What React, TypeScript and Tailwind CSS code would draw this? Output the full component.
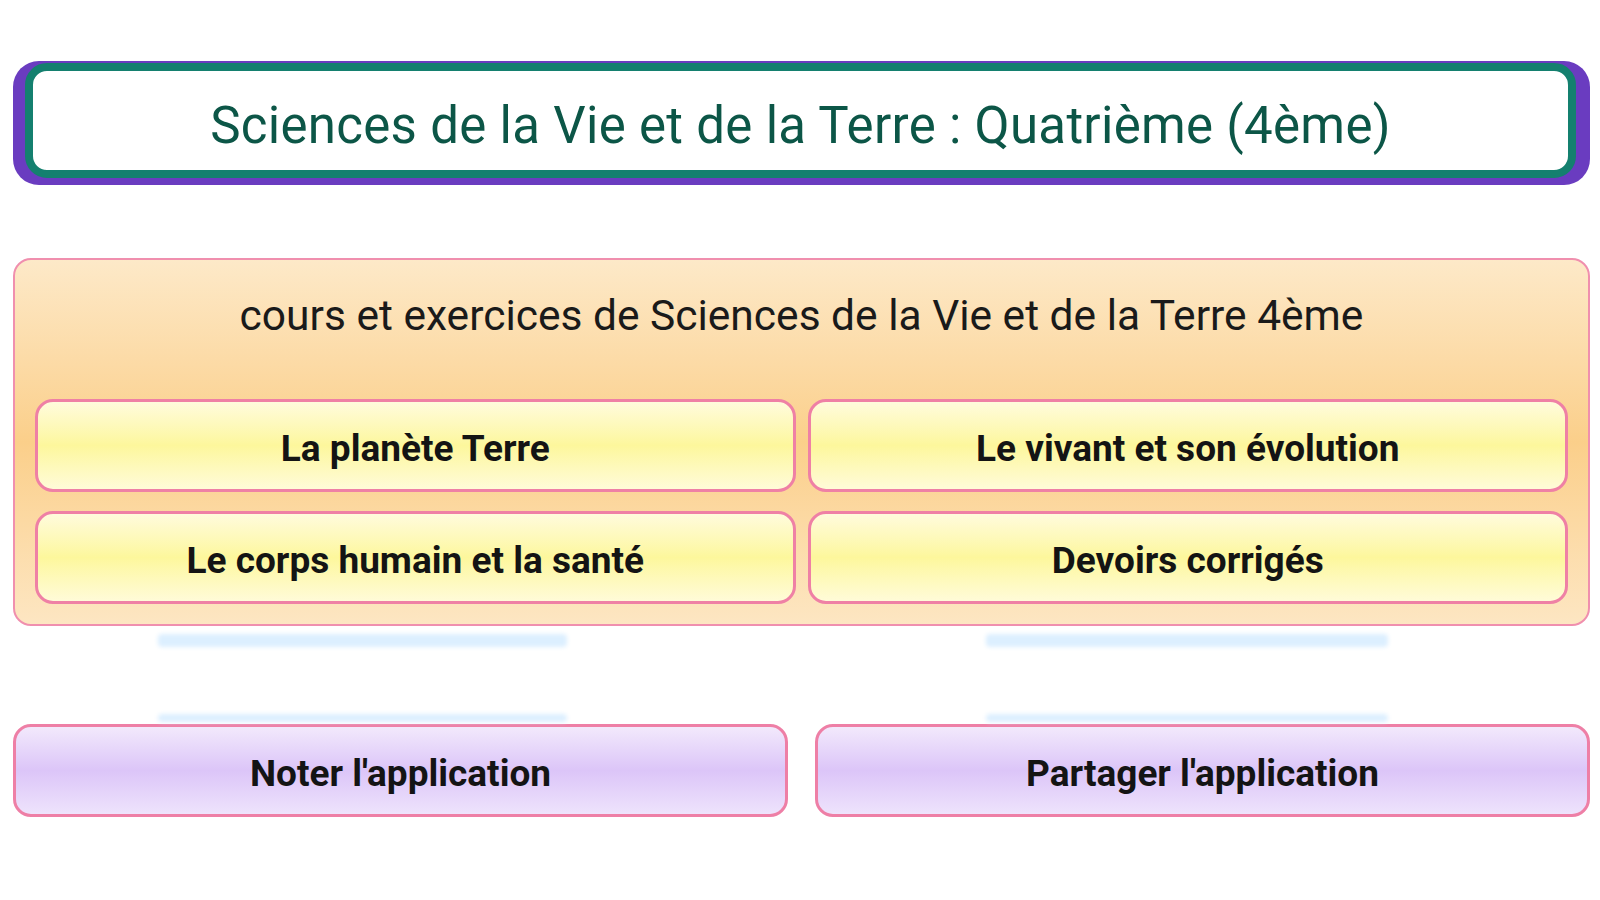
const topics = [
  'La planète Terre',
  'Le vivant et son évolution',
  'Le corps humain et la santé',
  'Devoirs corrigés',
]

function Streaks({ className }: { className: string }) {
  return (
    <div className={`grid grid-cols-2 gap-[27px] ${className}`}>
      <div className="ml-[145px] mr-[221px] h-full rounded-sm bg-[#dcefff] blur-[2px]" />
      <div className="ml-[171px] mr-[202px] h-full rounded-sm bg-[#dcefff] blur-[2px]" />
    </div>
  )
}

export default function App() {
  return (
    <div
      className="w-[1600px] h-[900px] bg-white pl-[13px] pr-[10px] pt-[61px] flex flex-col"
      style={{ fontFamily: 'Roboto, "Noto Sans", sans-serif' }}
    >
      <div className="rounded-[26px] bg-[#6a3cc0] pt-[2px] pl-[12px] pr-[14px] pb-[7px]">
        <div className="h-[115px] rounded-[22px] border-[8px] border-[#14806f] bg-white flex items-center justify-center pt-[11px]">
          <span className="text-[51px] text-[#0c5647] tracking-[0.3px]">
            Sciences de la Vie et de la Terre : Quatrième (4ème)
          </span>
        </div>
      </div>

      <div className="mt-[73px] rounded-[18px] border-2 border-[#f08fae] bg-gradient-to-b from-[#fde9c8] via-[#fbcf8a] to-[#fde6c2] px-[20px] pt-[32px] pb-[20px]">
        <p className="text-center text-[42.5px] leading-[48px] text-[#1a1a1a] mb-[59px]">
          cours et exercices de Sciences de la Vie et de la Terre 4ème
        </p>
        <div className="grid grid-cols-2 gap-x-[12px] gap-y-[19px]">
          {topics.map((t) => (
            <button
              key={t}
              className="h-[93px] rounded-[18px] border-[3px] border-[#ef80a5] bg-gradient-to-b from-[#fffbdc] via-[#fdf79c] to-[#fffbd8] pt-[6px] text-[37px] font-bold text-[#141414]"
            >
              {t}
            </button>
          ))}
        </div>
      </div>

      <Streaks className="h-[13px] mt-[8px]" />

      <Streaks className="h-[8px] mt-[67px]" />

      <div className="grid grid-cols-2 gap-[27px] mt-[2px]">
        {["Noter l'application", "Partager l'application"].map((t) => (
          <button
            key={t}
            className="h-[93px] rounded-[18px] border-[3px] border-[#ee7fa6] bg-gradient-to-b from-[#f2e9fc] via-[#dcc5f8] to-[#eee3fc] pt-[6px] text-[37px] font-bold text-[#141414]"
          >
            {t}
          </button>
        ))}
      </div>
    </div>
  )
}
